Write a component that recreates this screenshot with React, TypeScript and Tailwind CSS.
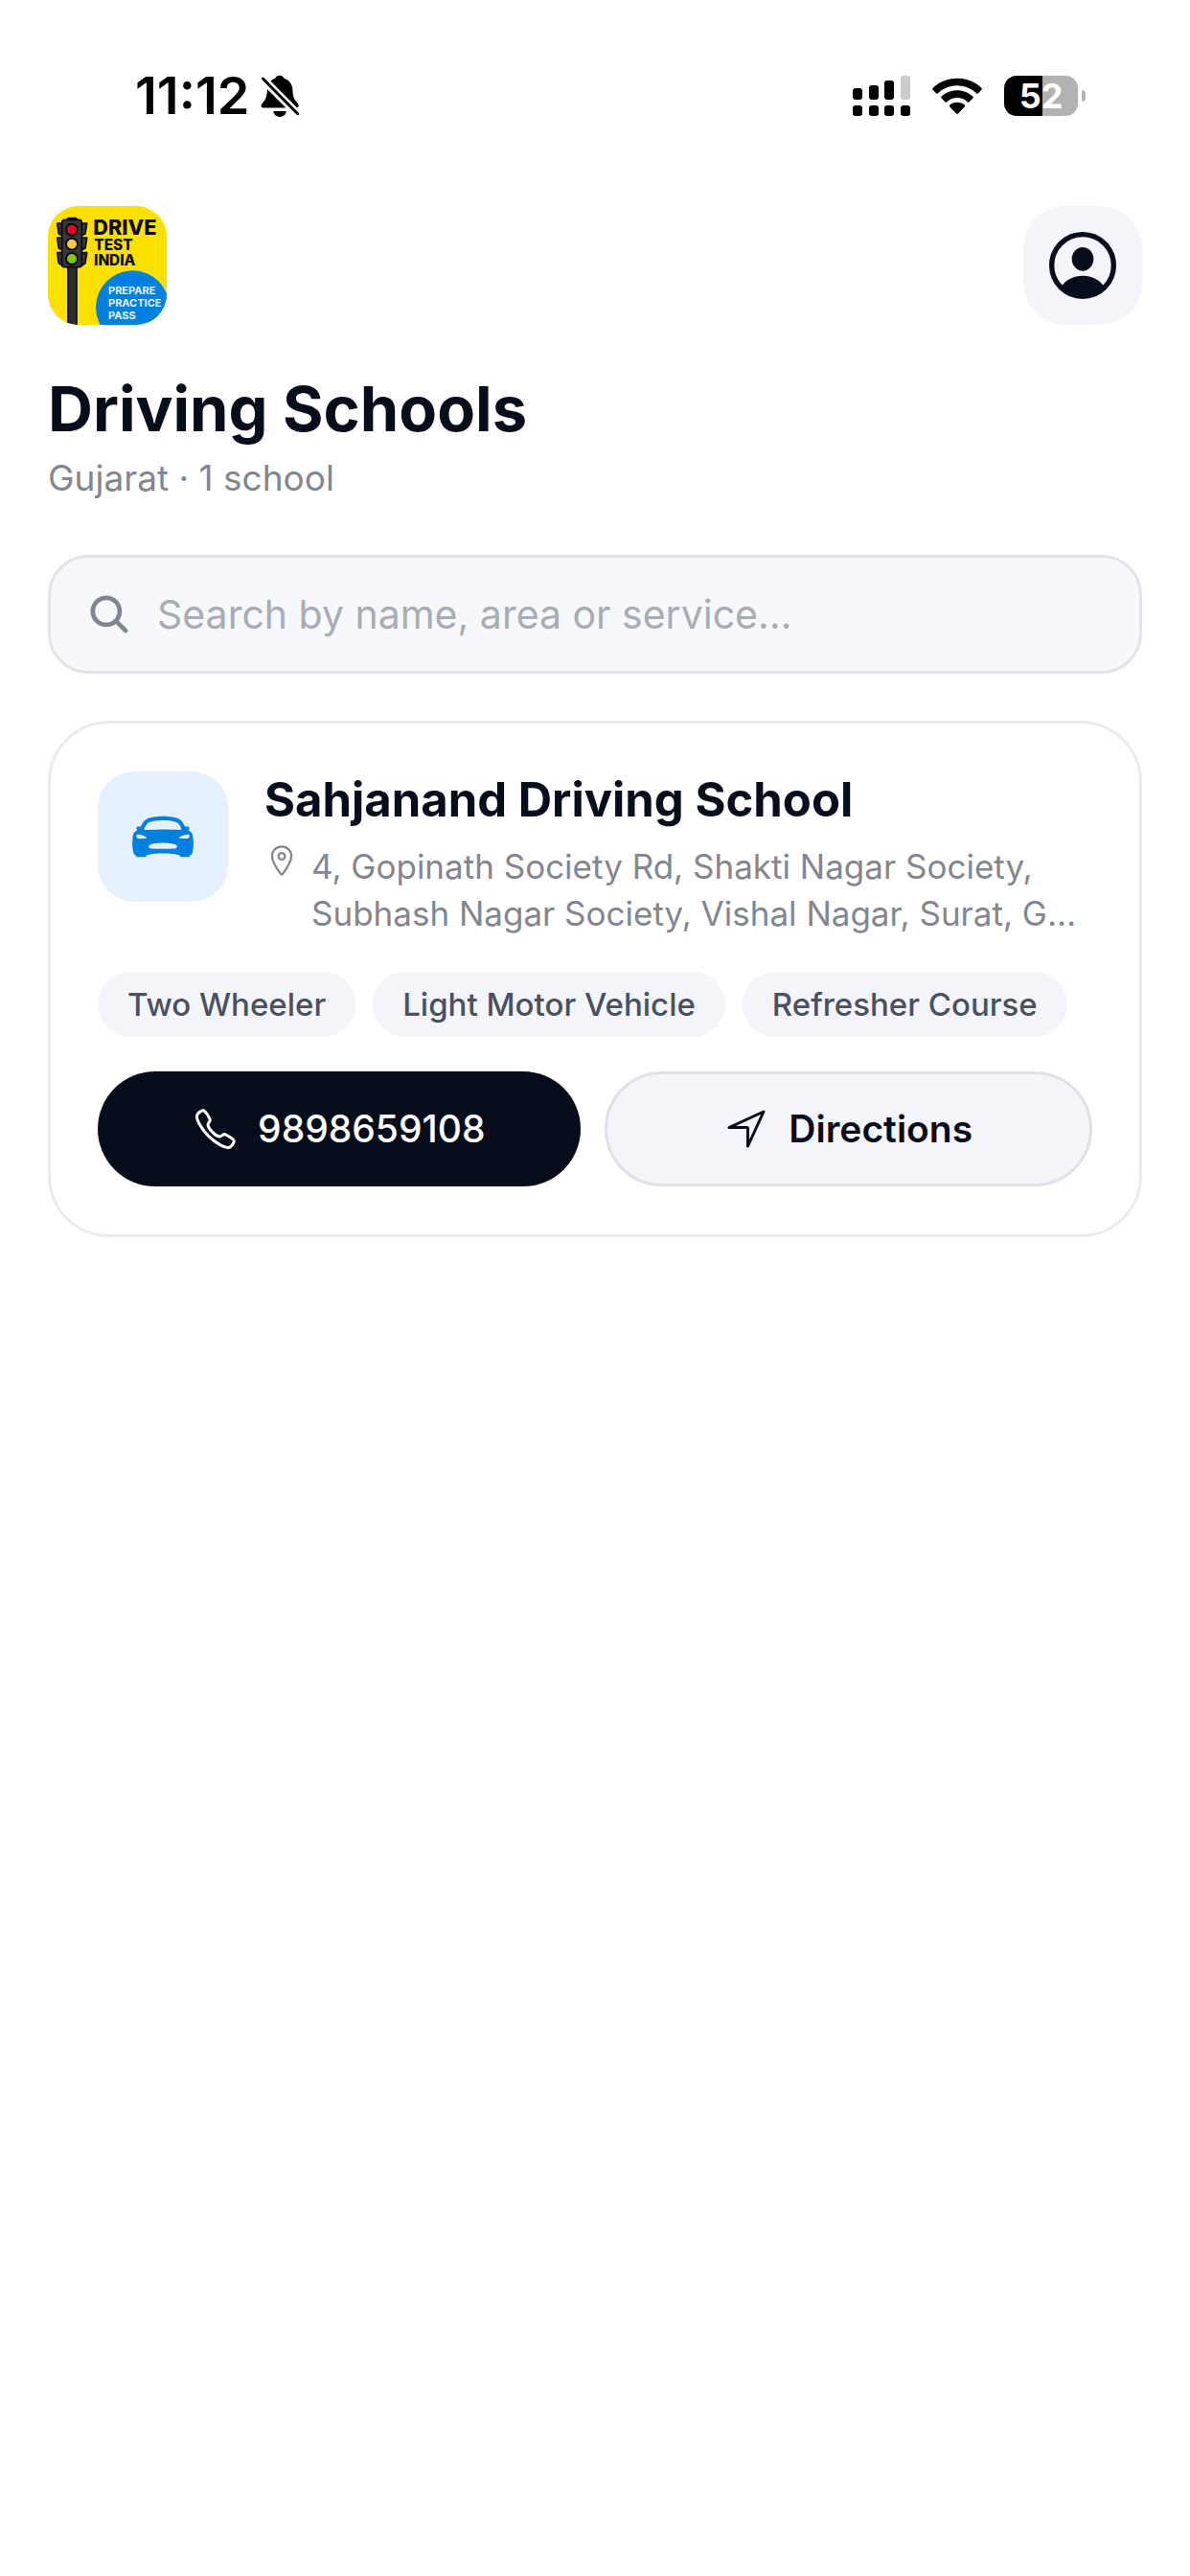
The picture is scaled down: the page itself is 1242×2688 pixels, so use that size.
import { IoCallOutline, IoCarSport, IoLocationOutline, IoNavigateOutline, IoSearch } from 'react-icons/io5'

const schools = [
  {
    name: 'Sahjanand Driving School',
    address: '4, Gopinath Society Rd, Shakti Nagar Society, Subhash Nagar Society, Vishal Nagar, Surat, G…',
    services: ['Two Wheeler', 'Light Motor Vehicle', 'Refresher Course'],
    phone: '9898659108',
  },
]

function BellOff() {
  return (
    <svg viewBox="0 0 124 136" className="w-[41px] h-[45px]" aria-hidden="true">
      <path d="M60 2c7 0 11 3 14 9 17 6 26 18 27 36 1 20 4 29 11 37 6 7 8 10 8 14 0 4-3 6-7 6H8c-7 0-8-7-4-12 10-12 16-18 17-45 0-20 10-30 25-36 3-6 7-9 14-9z" />
      <path d="M40 115h41c-2 12-10 18-20 18s-19-6-21-18z" />
      <path d="M-3 3L124 131" stroke="#fff" strokeWidth="25" />
      <path d="M7 12L117 123" stroke="#000" strokeWidth="9" strokeLinecap="round" />
    </svg>
  )
}

function Signal() {
  return (
    <svg viewBox="0 0 60 43" className="w-[60px] h-[43px]" aria-hidden="true">
      <rect x="0" y="13" width="10" height="12" rx="3" />
      <rect x="17" y="10" width="10" height="15" rx="3" />
      <rect x="33" y="5" width="10" height="20" rx="3" />
      <rect x="50" y="0" width="10" height="25" rx="3" fill="#cbcbcb" />
      <rect x="0" y="31" width="10" height="11" rx="3" />
      <rect x="17" y="31" width="10" height="11" rx="3" />
      <rect x="33" y="31" width="10" height="11" rx="3" />
      <rect x="50" y="31" width="10" height="11" rx="3" />
    </svg>
  )
}

function Wifi() {
  return (
    <svg viewBox="0 0 156 116" className="w-[52px] h-[39px]" aria-hidden="true">
      <path d="M78 2c30 0 56 11 76 30 2 2 2 4 0 6l-10 10c-2 2-4 2-6 0a88 88 0 00-120 0c-2 2-4 2-6 0L2 38c-2-2-2-4 0-6C22 13 48 2 78 2z" />
      <path d="M78 39c19 0 36 7 49 19 2 2 2 4 0 6l-11 11c-2 2-4 2-6 0a48 48 0 00-64 0c-2 2-4 2-6 0L29 64c-2-2-2-4 0-6 13-12 30-19 49-19z" />
      <path d="M78 77c9 0 17 3 23 8 2 2 2 4 0 6l-20 21c-2 2-4 2-6 0L55 91c-2-2-2-4 0-6 6-5 14-8 23-8z" />
    </svg>
  )
}

function Logo() {
  return (
    <svg viewBox="0 0 372 372" className="w-[124px] h-[124px] rounded-[32px] font-['Inter',sans-serif]" role="img" aria-label="Drive Test India">
      <rect width="372" height="372" fill="#fbe000" />
      <rect x="63" y="185" width="27" height="200" fill="#2c2d31" stroke="#0b0b0c" strokeWidth="5" />
      <g fill="#35363b" stroke="#0b0b0c" strokeWidth="5" strokeLinejoin="round">
        <path d="M46 54H29l5 33 12 6zM46 99H29l5 33 12 6zM46 146H29l5 33 12 8z" />
        <path d="M104 54h18l-5 33-13 6zM104 99h18l-5 33-13 6zM104 146h18l-5 33-13 8z" />
        <path d="M60 42l4-4h24l4 4z" />
        <rect x="44" y="43" width="62" height="148" rx="9" />
      </g>
      <g stroke="#0b0b0c" strokeWidth="6">
        <circle cx="75" cy="74" r="18" fill="#dc0a26" />
        <circle cx="75" cy="119" r="18" fill="#f7cb3f" />
        <circle cx="75" cy="165" r="18" fill="#83c40c" />
      </g>
      <g fill="#0b0b0c" fontWeight="800">
        <text x="142" y="89" fontSize="65">DRIVE</text>
        <text x="145" y="139" fontSize="46">TEST</text>
        <text x="144" y="187" fontSize="46">INDIA</text>
      </g>
      <circle cx="265" cy="317" r="115" fill="#0080df" />
      <g fill="#e6f2fd" fontWeight="700" fontSize="33">
        <text x="189" y="275">PREPARE</text>
        <text x="189" y="315">PRACTICE</text>
        <text x="189" y="354">PASS</text>
      </g>
    </svg>
  )
}

function ProfileIcon() {
  return (
    <svg viewBox="0 0 210 210" className="w-[70px] h-[70px]" fill="#080d1c" aria-hidden="true">
      <circle cx="105" cy="105" r="97" fill="none" stroke="#080d1c" strokeWidth="16" />
      <ellipse cx="105" cy="85" rx="34" ry="37" />
      <path d="M40 168c12-18 36-31 65-31s53 13 65 31c-16 20-39 34-65 34s-49-14-65-34z" />
    </svg>
  )
}

export default function App() {
  return (
    <div className="min-h-screen bg-white font-['Inter','Noto_Sans',sans-serif] text-[#080d1c]">

      {/* Status bar */}
      <div className="flex items-center justify-between pt-[68px] pl-[141px] pr-[109px] text-black">
        <div className="flex items-center gap-3">
          <span className="text-[54px] leading-[64px] font-semibold">11:12</span>
          <BellOff />
        </div>
        <div className="flex items-center gap-[23px]">
          <Signal />
          <Wifi />
          <div className="flex items-center gap-1">
            <div className="flex items-center justify-center w-[77px] h-[42px] rounded-[13px] bg-linear-to-r from-black from-52% to-[#b2b2b2] to-52% text-[36px] leading-[42px] font-bold text-white">52</div>
            <div className="w-1 h-3 rounded-r-full bg-[#b2b2b2]"></div>
          </div>
        </div>
      </div>

      <main className="px-[50px] pt-[83px]">

        {/* Header */}
        <header>
          <div className="flex items-center justify-between">
            <Logo />
            <button type="button" aria-label="Profile" className="flex items-center justify-center w-[124px] h-[124px] rounded-[44px] bg-[#f4f5fa]">
              <ProfileIcon />
            </button>
          </div>
          <h1 className="mt-12 text-[65px] leading-[80px] font-bold">Driving Schools</h1>
          <p className="mt-2 text-[37px] leading-[48px] text-[#83868f]">Gujarat · 1 school</p>
        </header>

        {/* Search */}
        <label className="mt-14 flex items-center gap-[26px] h-[124px] px-[37px] rounded-[42px] border-3 border-[#e3e4e9] bg-[#f7f8fc]">
          <IoSearch className="size-[48px] shrink-0 text-[#80858f]" />
          <input
            type="search"
            aria-label="Search driving schools"
            placeholder="Search by name, area or service…"
            className="w-full bg-transparent text-[41px] leading-[52px] placeholder:text-[#a9acb4] focus:outline-none"
          />
        </label>

        {/* Results */}
        {schools.map((school) => (
          <article key={school.name} className="mt-[49px] px-[49px] py-[50px] rounded-[64px] border-3 border-[#ebebec] bg-white">
            <div className="flex items-start gap-[38px]">
              <div className="flex items-center justify-center size-[136px] shrink-0 rounded-[38px] bg-[#e5f1fe]">
                <IoCarSport className="size-[68px] text-[#0080df]" />
              </div>
              <div className="min-w-0 flex-1">
                <h2 className="text-[49px] leading-[60px] font-bold">{school.name}</h2>
                <div className="mt-[15px] flex items-start gap-[13px] text-[#83868f]">
                  <IoLocationOutline className="size-[36px] shrink-0" />
                  <p className="text-[35px] leading-[49px]">{school.address}</p>
                </div>
              </div>
            </div>

            <ul className="mt-9 flex flex-wrap gap-[18px]">
              {school.services.map((service) => (
                <li key={service} className="px-[31px] rounded-full bg-[#f4f5fa] text-[33px] leading-[68px] font-medium text-[#4b505e]">{service}</li>
              ))}
            </ul>

            <div className="mt-9 flex gap-[25px]">
              <a href={`tel:${school.phone}`} className="flex flex-1 items-center justify-center gap-5 h-[120px] rounded-full bg-[#080d1c] text-[39px] font-medium text-white">
                <IoCallOutline className="size-[48px]" />
                {school.phone}
              </a>
              <button type="button" className="flex flex-1 items-center justify-center gap-5 h-[120px] rounded-full border-3 border-[#e0e1e7] bg-[#f4f5fa] text-[39px] font-semibold">
                <IoNavigateOutline className="size-[48px]" />
                Directions
              </button>
            </div>
          </article>
        ))}
      </main>
    </div>
  )
}
